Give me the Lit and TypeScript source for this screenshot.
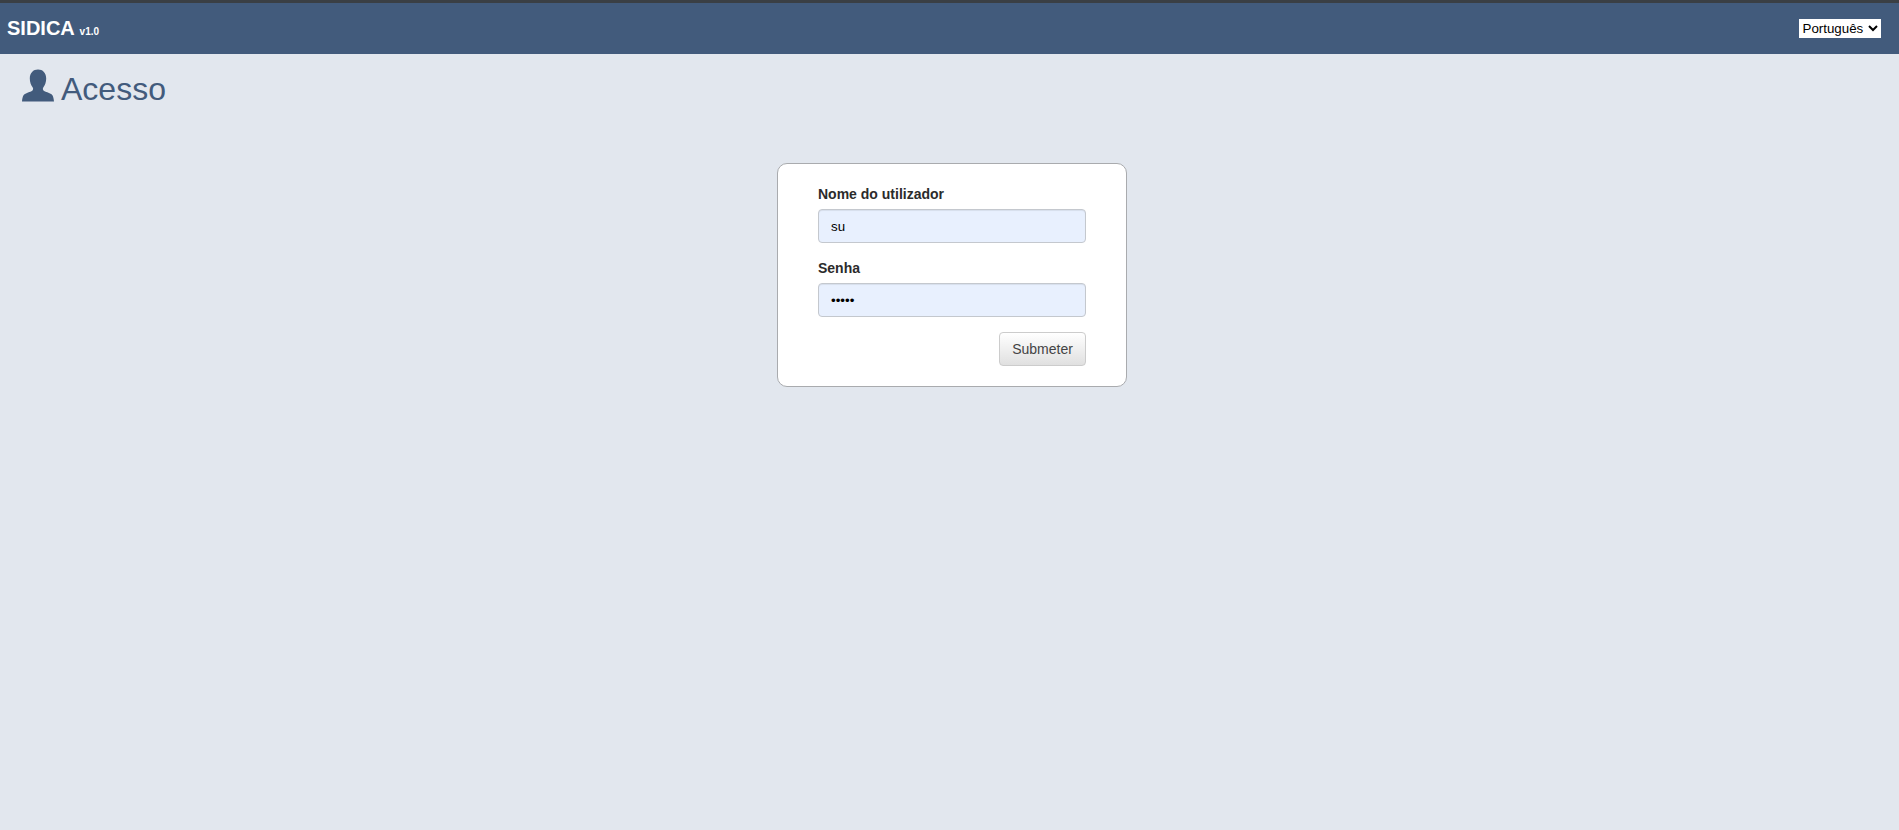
import { css, LitElement, html } from "lit";
import { customElement } from "lit/decorators.js";

@customElement("app-root")
export class AppRoot extends LitElement {
  render() {
    return html`
      <header class="topbar">
        <div class="brand">SIDICA <small>v1.0</small></div>
        <select class="lang" aria-label="Idioma">
          <option>Português</option>
          <option>English</option>
        </select>
      </header>
      <h1 class="page-title">
        <svg class="user-icon" viewBox="0 0 32 33" aria-hidden="true">
          <path
            d="M16 .5c4.800 0 8.200 3.400 8.200 9 0 3.600-1.200 6.800-2.800 8.800-.9 1.100-.7 3 .7 3.700 2 1 4.500 1.700 6.400 2.700 1.800.9 2.900 2.100 3.500 7.800H0c.6-5.700 1.700-6.900 3.500-7.800 1.900-1 4.400-1.700 6.400-2.700 1.400-.7 1.600-2.600.7-3.700-1.600-2-2.800-5.200-2.800-8.800 0-5.600 3.400-9 8.200-9z"
          />
        </svg>
        Acesso
      </h1>
      <main class="content">
        <form class="login" @submit=${(e: Event) => e.preventDefault()}>
          <label for="user">Nome do utilizador</label>
          <input id="user" type="text" value="su" />
          <label for="pass">Senha</label>
          <input id="pass" type="password" value="sudo1" />
          <div class="actions">
            <button type="submit">Submeter</button>
          </div>
        </form>
      </main>
    `;
  }

  static styles = css`
    :host {
      display: block;
      min-height: 830px;
      background: #e2e7ee;
      font-family: "Liberation Sans", Arial, sans-serif;
      color: #333;
    }

    .topbar {
      display: flex;
      justify-content: space-between;
      align-items: center;
      box-sizing: border-box;
      height: 54px;
      padding: 0 18px 0 7px;
      background: #425b7c;
      border-top: 3px solid #3a3f44;
    }

    .brand {
      color: #fff;
      font-size: 20px;
      font-weight: 700;
    }

    .brand small {
      font-size: 10px;
    }

    .lang {
      width: 82.5px;
      height: 19px;
      padding: 0;
      border: 0;
      background: #fff;
      color: #000;
      font-family: inherit;
      font-size: 13.33px;
    }

    .page-title {
      display: flex;
      align-items: center;
      gap: 7px;
      margin: 0;
      padding: 17px 22px 0;
      color: #425b7c;
      font-size: 32px;
      font-weight: 400;
      line-height: 36px;
    }

    .user-icon {
      align-self: flex-start;
      width: 32px;
      height: 33px;
      margin-top: -2px;
      fill: #425b7c;
    }

    .content {
      display: flex;
      justify-content: center;
      padding: 56px 0 0 5px;
    }

    .login {
      display: flex;
      flex-direction: column;
      box-sizing: border-box;
      width: 350px;
      height: 224px;
      padding: 21px 40px 0;
      background: #fff;
      border: 1px solid #a9abae;
      border-radius: 10px;
    }

    label {
      height: 18px;
      margin-bottom: 6px;
      color: #2b2b2b;
      font-size: 14px;
      font-weight: 700;
      line-height: 18px;
    }

    input {
      box-sizing: border-box;
      height: 34px;
      margin-bottom: 16px;
      padding: 0 12px;
      background: #e8f0fe;
      border: 1px solid #c4c8ce;
      border-radius: 4px;
      box-shadow: inset 0 1px 1px rgba(0, 0, 0, 0.075);
      color: #000;
      font-family: inherit;
      font-size: 13.33px;
    }

    .actions {
      display: flex;
      justify-content: flex-end;
      margin-top: -1px;
    }

    button {
      box-sizing: border-box;
      width: 87px;
      height: 34px;
      background: linear-gradient(#fff, #e0e0e0);
      border: 1px solid #ccc;
      border-radius: 4px;
      color: #444;
      font-family: inherit;
      font-size: 14px;
    }
  `;
}
